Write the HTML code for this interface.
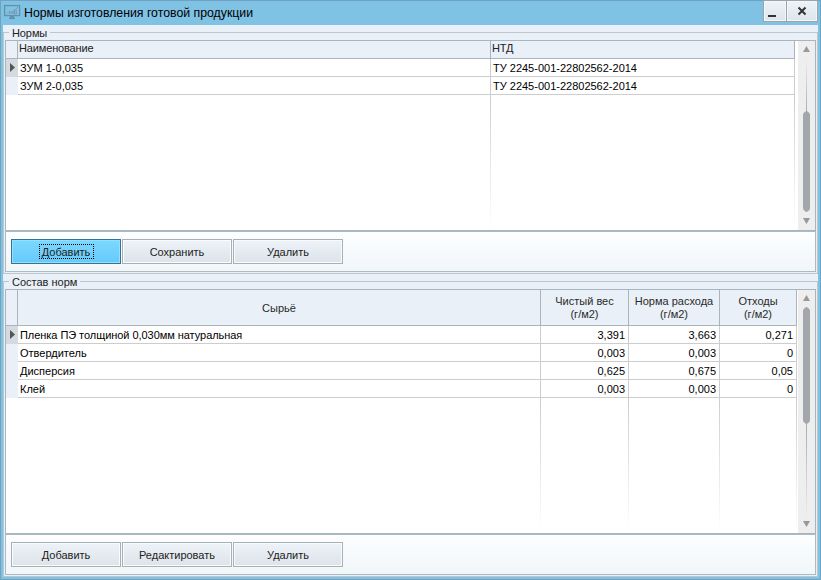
<!DOCTYPE html>
<html><head><meta charset="utf-8">
<style>
*{box-sizing:border-box;margin:0;padding:0}
html,body{width:821px;height:580px;overflow:hidden}
body{position:relative;background:#80c2e4;font-family:"Liberation Sans",sans-serif;font-size:11px;color:#000}
.a{position:absolute}
.t{position:absolute;white-space:nowrap;line-height:13px}
.frameL{left:0;top:0;width:1px;height:580px;background:#6ea3c3}
.frameR{left:820px;top:0;width:1px;height:580px;background:#6ea3c3}
.frameT{left:0;top:0;width:821px;height:1px;background:#6ea3c3}
.frameB{left:0;top:579px;width:821px;height:1px;background:#6ea3c3}
.client{left:3px;top:25px;width:815px;height:552px;background:#e9f0f7}
.tbtn{top:0;height:22px;border:1px solid #9aa4aa;background:linear-gradient(#ecf3f9,#dde5eb);box-shadow:inset 0 0 0 1px #f3f7fa}
.gline{background:#bcc6cb}
.glabel{background:#e9f0f7}
.grid{border:1px solid #a7b5bf;background:#fff}
.hdr{background:#e9f0f7}
.hsep{background:#a9b4bb}
.rline{background:#cdcdcd}
.track{background:#eeeeee}
.thumb{background:#a3a7ab;border-radius:4px}
.panel{border:1px solid #adbac1;background:linear-gradient(#fcfeff,#f1f6f9)}
.btn{height:25px;width:110px;border:1px solid #a7b0b5;background:linear-gradient(#edf3f8,#dce3e9);box-shadow:inset 0 0 0 1px #f9fbfc;text-align:center;line-height:23px;padding-top:1px;color:#222}
.btnf{border-color:#3e6f8e;background:linear-gradient(#7bd9fe,#66c9fb);box-shadow:inset 0 0 0 1px #8fe2ff}
.num{text-align:right}
</style></head><body>
<div class="a frameT"></div><div class="a frameL"></div><div class="a frameR"></div><div class="a frameB"></div>

<!-- title icon -->
<svg class="a" style="left:3px;top:4px" width="18" height="16" viewBox="0 0 18 16">
  <rect x="1.6" y="1.6" width="15" height="10" fill="none" stroke="#6490a9" stroke-width="1.3"/>
  <rect x="7" y="12" width="4" height="2" fill="#6490a9"/>
  <rect x="6" y="13.5" width="6" height="1.6" fill="#6490a9"/>
  <path d="M3.5 9.8 L7 7.2 L9 8.2 L12 5.8 L15 3.2" fill="none" stroke="#6f98b0" stroke-width="0.8"/>
  <rect x="6" y="8.5" width="1.3" height="1.5" fill="#6f98b0"/><rect x="8.3" y="8" width="1.4" height="2" fill="#6f98b0"/><rect x="10.8" y="7" width="1.4" height="3" fill="#6f98b0"/><rect x="11" y="6" width="2.4" height="4" fill="none" stroke="#6f98b0" stroke-width="0.7"/>
</svg>
<div class="t" style="left:24px;top:6px;font-size:12.3px;line-height:15px;color:#000">Нормы изготовления готовой продукции</div>

<!-- title buttons -->
<div class="a tbtn" style="left:763px;width:24px"></div>
<div class="a tbtn" style="left:786px;width:32px"></div>
<div class="a" style="left:768px;top:15px;width:8px;height:2px;background:#333"></div>
<svg class="a" style="left:797px;top:6px" width="10" height="10" viewBox="0 0 10 10"><path d="M1.5 1.5 L8.5 8.5 M8.5 1.5 L1.5 8.5" stroke="#333" stroke-width="2"/></svg>

<div class="a client"></div>

<!-- Group 1 -->
<div class="a gline" style="left:3px;top:32px;width:815px;height:1px"></div>
<div class="a gline" style="left:3px;top:32px;width:1px;height:242px"></div>
<div class="a gline" style="left:817px;top:32px;width:1px;height:242px"></div>
<div class="a gline" style="left:3px;top:273px;width:815px;height:1px"></div>
<div class="a glabel" style="left:9px;top:26px;width:41px;height:12px"></div>
<div class="t" style="left:12px;top:27px;color:#222;letter-spacing:-0.1px">Нормы</div>

<!-- Grid 1 -->
<div class="a grid" style="left:5px;top:40px;width:811px;height:191px"></div>
<div class="a hdr" style="left:6px;top:41px;width:789px;height:17px"></div>
<div class="a hsep" style="left:6px;top:58px;width:789px;height:1px"></div>
<div class="a hsep" style="left:17px;top:41px;width:1px;height:17px"></div>
<div class="a hsep" style="left:490px;top:41px;width:1px;height:17px"></div>
<div class="a hsep" style="left:794px;top:41px;width:1px;height:17px"></div>
<div class="t" style="left:19px;top:42px;color:#222;letter-spacing:-0.15px">Наименование</div>
<div class="t" style="left:492px;top:42px;color:#222;letter-spacing:-0.2px">НТД</div>
<!-- rows -->
<div class="a" style="left:6px;top:59px;width:12px;height:18px;background:#d3dae0"></div>
<div class="a" style="left:6px;top:77px;width:12px;height:18px;background:#e9f0f7"></div>
<svg class="a" style="left:10px;top:63px" width="6" height="10"><path d="M0 0 L5 4.5 L0 9 Z" fill="#555"/></svg>
<div class="a rline" style="left:18px;top:76px;width:777px;height:1px"></div>
<div class="a rline" style="left:18px;top:94px;width:777px;height:1px"></div>
<div class="a" style="left:490px;top:59px;width:1px;height:36px;background:#cdcdcd"></div>
<div class="a" style="left:794px;top:59px;width:1px;height:36px;background:#cdcdcd"></div>
<div class="a" style="left:490px;top:95px;width:1px;height:134px;background:linear-gradient(#cdcdcd,#fff)"></div>
<div class="a" style="left:794px;top:95px;width:1px;height:134px;background:linear-gradient(#cdcdcd,#fff)"></div>
<div class="t" style="left:20px;top:62px">ЗУМ 1-0,035</div>
<div class="t" style="left:20px;top:80px">ЗУМ 2-0,035</div>
<div class="t" style="left:493px;top:62px">ТУ 2245-001-22802562-2014</div>
<div class="t" style="left:493px;top:80px">ТУ 2245-001-22802562-2014</div>
<!-- scrollbar 1 -->
<div class="a track" style="left:798px;top:41px;width:17px;height:189px"></div>
<svg class="a" style="left:802px;top:45px" width="9" height="8"><path d="M1 7 L4.5 1 L8 7 Z" fill="#999"/></svg>
<div class="a" style="left:806px;top:59px;width:1px;height:53px;background:linear-gradient(rgba(160,164,168,0),#a8acb0)"></div>
<svg class="a" style="left:803px;top:111px" width="7" height="101" viewBox="0 0 7 101"><path d="M0 4 C0 2 2 0.6 3.5 0 C5 0.6 7 2 7 4 V97 C7 99 5 100.4 3.5 101 C2 100.4 0 99 0 97 Z" fill="#a3a7ab"/></svg>
<svg class="a" style="left:802px;top:217px" width="9" height="8"><path d="M1 1 L4.5 7 L8 1 Z" fill="#999"/></svg>

<!-- Panel 1 -->
<div class="a panel" style="left:5px;top:231px;width:811px;height:41px"></div>
<div class="a btn btnf" style="left:11px;top:239px">Добавить</div>
<div class="a" style="left:39px;top:244px;width:55px;height:15px;border:1px dotted #000"></div>
<div class="a btn" style="left:122px;top:239px">Сохранить</div>
<div class="a btn" style="left:233px;top:239px">Удалить</div>

<!-- Group 2 -->
<div class="a gline" style="left:3px;top:281px;width:815px;height:1px"></div>
<div class="a gline" style="left:3px;top:281px;width:1px;height:296px"></div>
<div class="a gline" style="left:817px;top:281px;width:1px;height:296px"></div>
<div class="a gline" style="left:3px;top:576px;width:815px;height:1px"></div>
<div class="a glabel" style="left:9px;top:275px;width:71px;height:12px"></div>
<div class="t" style="left:12px;top:276px;color:#222">Состав норм</div>

<!-- Grid 2 -->
<div class="a grid" style="left:5px;top:289px;width:811px;height:245px"></div>
<div class="a hdr" style="left:6px;top:290px;width:791px;height:35px"></div>
<div class="a hsep" style="left:6px;top:325px;width:791px;height:1px"></div>
<div class="a hsep" style="left:17px;top:290px;width:1px;height:35px"></div>
<div class="a hsep" style="left:540px;top:290px;width:1px;height:35px"></div>
<div class="a hsep" style="left:628px;top:290px;width:1px;height:35px"></div>
<div class="a hsep" style="left:719px;top:290px;width:1px;height:35px"></div>
<div class="a hsep" style="left:796px;top:290px;width:1px;height:35px"></div>
<div class="t" style="left:18px;top:302px;width:522px;text-align:center;color:#2a2a2a">Сырьё</div>
<div class="t" style="left:541px;top:295px;width:87px;text-align:center;color:#2a2a2a">Чистый вес<br>(г/м2)</div>
<div class="t" style="left:629px;top:295px;width:90px;text-align:center;color:#2a2a2a">Норма расхода<br>(г/м2)</div>
<div class="t" style="left:720px;top:295px;width:76px;text-align:center;color:#2a2a2a">Отходы<br>(г/м2)</div>
<!-- rows -->
<div class="a" style="left:6px;top:326px;width:12px;height:18px;background:#d3dae0"></div>
<div class="a" style="left:6px;top:344px;width:12px;height:54px;background:#e9f0f7"></div>
<svg class="a" style="left:10px;top:330px" width="6" height="10"><path d="M0 0 L5 4.5 L0 9 Z" fill="#555"/></svg>
<div class="a rline" style="left:18px;top:343px;width:779px;height:1px"></div>
<div class="a rline" style="left:18px;top:361px;width:779px;height:1px"></div>
<div class="a rline" style="left:18px;top:379px;width:779px;height:1px"></div>
<div class="a rline" style="left:18px;top:397px;width:779px;height:1px"></div>
<div class="a rline" style="left:540px;top:326px;width:1px;height:72px"></div>
<div class="a rline" style="left:628px;top:326px;width:1px;height:72px"></div>
<div class="a rline" style="left:719px;top:326px;width:1px;height:72px"></div>
<div class="a rline" style="left:796px;top:326px;width:1px;height:72px"></div>
<div class="a" style="left:540px;top:398px;width:1px;height:135px;background:linear-gradient(#cdcdcd,#fff)"></div>
<div class="a" style="left:628px;top:398px;width:1px;height:135px;background:linear-gradient(#cdcdcd,#fff)"></div>
<div class="a" style="left:719px;top:398px;width:1px;height:135px;background:linear-gradient(#cdcdcd,#fff)"></div>
<div class="a" style="left:796px;top:398px;width:1px;height:135px;background:linear-gradient(#cdcdcd,#fff)"></div>
<div class="t" style="left:20px;top:329px;letter-spacing:-0.05px">Пленка ПЭ толщиной 0,030мм натуральная</div>
<div class="t" style="left:20px;top:347px">Отвердитель</div>
<div class="t" style="left:20px;top:365px">Дисперсия</div>
<div class="t" style="left:20px;top:383px">Клей</div>
<div class="t num" style="left:541px;top:329px;width:84px">3,391</div>
<div class="t num" style="left:629px;top:329px;width:87px">3,663</div>
<div class="t num" style="left:720px;top:329px;width:73px">0,271</div>
<div class="t num" style="left:541px;top:347px;width:84px">0,003</div>
<div class="t num" style="left:629px;top:347px;width:87px">0,003</div>
<div class="t num" style="left:720px;top:347px;width:73px">0</div>
<div class="t num" style="left:541px;top:365px;width:84px">0,625</div>
<div class="t num" style="left:629px;top:365px;width:87px">0,675</div>
<div class="t num" style="left:720px;top:365px;width:73px">0,05</div>
<div class="t num" style="left:541px;top:383px;width:84px">0,003</div>
<div class="t num" style="left:629px;top:383px;width:87px">0,003</div>
<div class="t num" style="left:720px;top:383px;width:73px">0</div>
<!-- scrollbar 2 -->
<div class="a track" style="left:798px;top:290px;width:17px;height:243px"></div>
<svg class="a" style="left:802px;top:294px" width="9" height="8"><path d="M1 7 L4.5 1 L8 7 Z" fill="#999"/></svg>
<svg class="a" style="left:803px;top:307px" width="7" height="117" viewBox="0 0 7 117"><path d="M0 4 C0 2 2 0.6 3.5 0 C5 0.6 7 2 7 4 V113 C7 115 5 116.4 3.5 117 C2 116.4 0 115 0 113 Z" fill="#a3a7ab"/></svg>
<div class="a" style="left:806px;top:424px;width:1px;height:95px;background:linear-gradient(#a8acb0,rgba(160,164,168,0))"></div>
<svg class="a" style="left:802px;top:520px" width="9" height="8"><path d="M1 1 L4.5 7 L8 1 Z" fill="#999"/></svg>

<!-- Panel 2 -->
<div class="a panel" style="left:5px;top:534px;width:811px;height:41px"></div>
<div class="a btn" style="left:11px;top:542px">Добавить</div>
<div class="a btn" style="left:122px;top:542px">Редактировать</div>
<div class="a btn" style="left:233px;top:542px">Удалить</div>
</body></html>
